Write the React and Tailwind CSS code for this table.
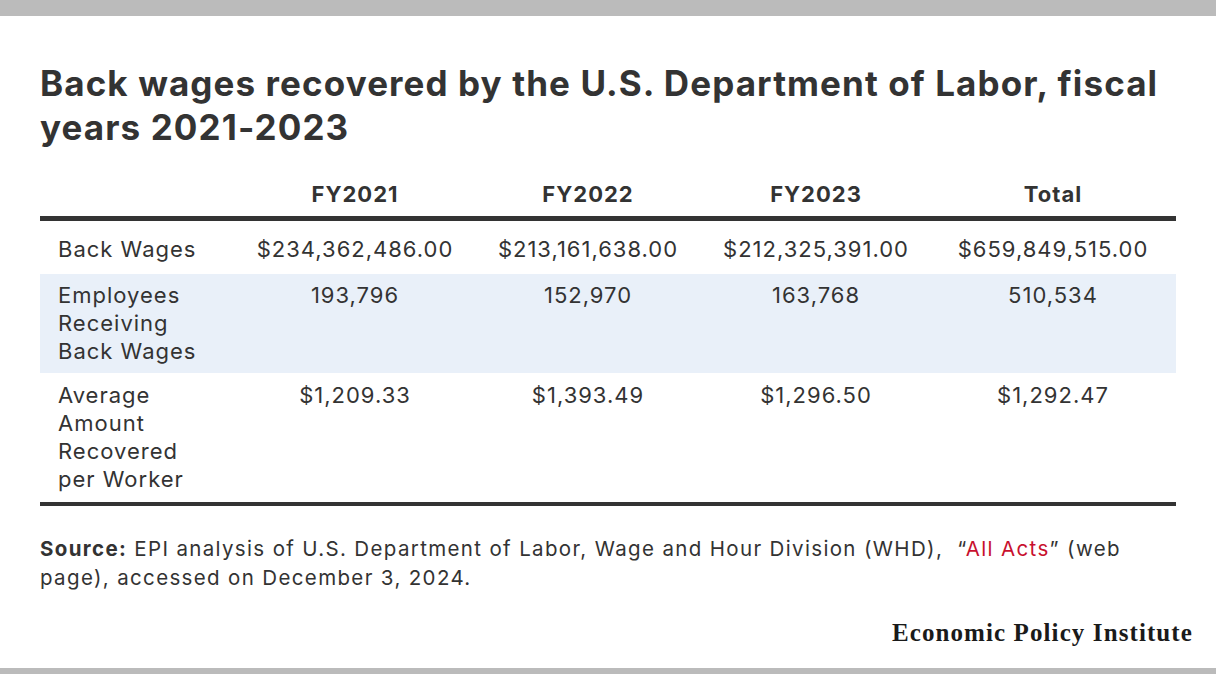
import React from "react";

const rows = [
  { label: ["Back Wages"], vals: ["$234,362,486.00", "$213,161,638.00", "$212,325,391.00", "$659,849,515.00"], cls: "bg-white pt-[14px] pb-[11px]" },
  { label: ["Employees", "Receiving", "Back Wages"], vals: ["193,796", "152,970", "163,768", "510,534"], cls: "bg-[#e9f0f9] pt-[7px] pb-[8px]" },
  { label: ["Average", "Amount", "Recovered", "per Worker"], vals: ["$1,209.33", "$1,393.49", "$1,296.50", "$1,292.47"], cls: "bg-white pt-[8px] pb-[9px]" },
];

export default function App() {
  return (
    <div className="w-[1216px] h-[700px] bg-white flex flex-col text-[#333333] font-['Inter',sans-serif]">
      <div className="h-[16px] bg-[#bbbbbb] shrink-0" />
      <div className="px-[40px]">
        <h1 className="mt-[45px] text-[35px] leading-[44px] font-bold tracking-[1.1px]">
          Back wages recovered by the U.S. Department of Labor, fiscal
          <br />
          years 2021-2023
        </h1>
        <div className="mt-[31px]">
          <div className="grid grid-cols-[196px_238px_228px_228px_246px] pb-[8px] border-b-[5px] border-[#333333] text-[22px] leading-[28px] font-bold tracking-[1px]">
            <div />
            <div className="text-center">FY2021</div>
            <div className="text-center">FY2022</div>
            <div className="text-center">FY2023</div>
            <div className="text-center">Total</div>
          </div>
          {rows.map((r, i) => (
            <div key={i} className={`grid grid-cols-[196px_238px_228px_228px_246px] text-[22px] leading-[28px] tracking-[1px] ${r.cls}`}>
              <div className="pl-[18px]">
                {r.label.map((l, j) => (
                  <div key={j}>{l}</div>
                ))}
              </div>
              {r.vals.map((v, j) => (
                <div key={j} className="text-center">{v}</div>
              ))}
            </div>
          ))}
          <div className="h-[4px] bg-[#333333]" />
        </div>
        <p className="mt-[28px] text-[20.5px] leading-[29px] tracking-[1.35px] whitespace-nowrap">
          <span className="font-bold">Source:</span> EPI analysis of U.S. Department of Labor, Wage and Hour Division (WHD),&nbsp; “<span className="text-[#c8102e]">All Acts</span>” (web
          <br />
          page), accessed on December 3, 2024.
        </p>
      </div>
      <div className="mt-[27px] pr-[23px] flex justify-end">
        <span className="font-['Liberation_Serif',serif] font-bold text-[25px] leading-[28px] tracking-[1.1px] text-[#1a1a1a]">Economic Policy Institute</span>
      </div>
      <div className="mt-[21px] h-[6px] bg-[#bbbbbb] shrink-0" />
    </div>
  );
}
